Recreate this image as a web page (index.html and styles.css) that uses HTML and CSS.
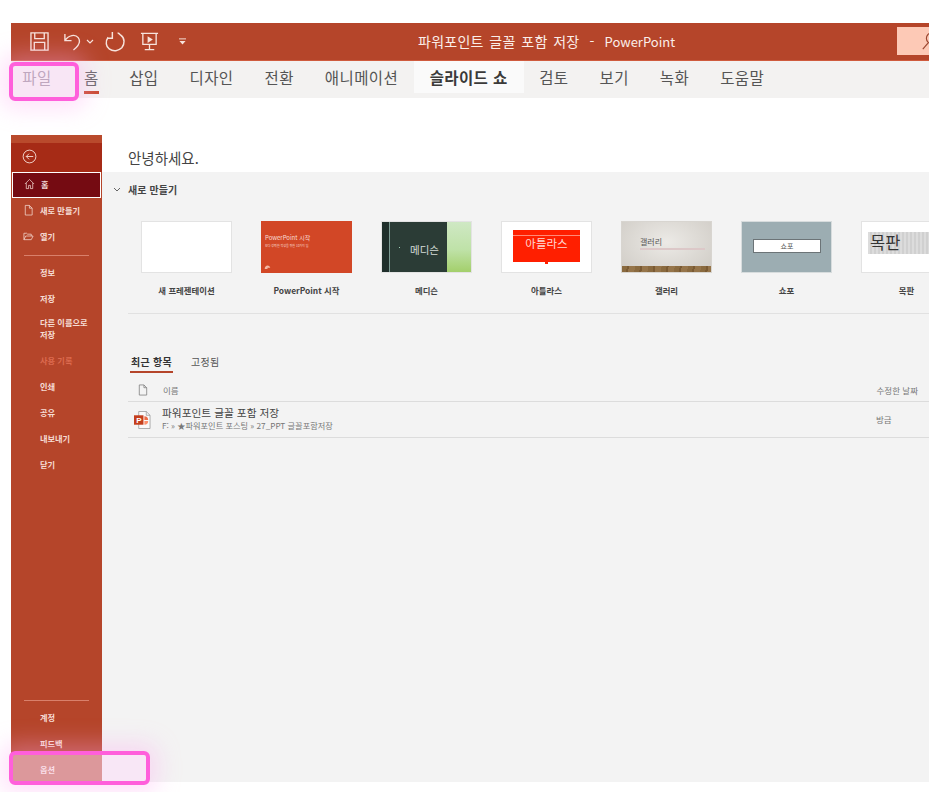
FILE: index.html
```html
<!DOCTYPE html>
<html lang="ko">
<head>
<meta charset="utf-8">
<title>파워포인트 글꼴 포함 저장 - PowerPoint</title>
<link rel="stylesheet" href="styles.css">
</head>
<body>
<div class="window">
  <header class="titlebar">
    <div class="qat">
      <svg class="qi save" viewBox="0 0 20 20"><path d="M1 1h18v18H1zM5 1v6h10V1M4.500 19v-8h11v8"/></svg>
      <svg class="qi undo" viewBox="0 0 20 20"><path d="M2 2v7h7M2 9C6 3 13 2 16 6c3 4 0 9-5 13"/></svg>
      <svg class="qchev" viewBox="0 0 8 5"><path d="M1 1l3 3 3-3"/></svg>
      <svg class="qi redo" viewBox="0 0 20 20"><path d="M7 1v6H2M3 6C0 10 1 15 4 17c4 3 9 2 12-1 3-4 3-9-1-12-1-1-2-2-3-2"/></svg>
      <svg class="qi show" viewBox="0 0 20 20"><path d="M1 1.500h18M3 1.500V13h14V1.500M10 13v5M5 18.500h10"/><path class="fill" d="M8 4.500l5.500 3.500L8 11.500z"/></svg>
      <svg class="qmore" viewBox="0 0 10 8"><path d="M1 1h8"/><path class="fill" d="M1.500 3.500h7L5 7.500z"/></svg>
    </div>
    <div class="doc-title">파워포인트 글꼴 포함 저장<span class="dt-dash">-</span><span class="dt-app">PowerPoint</span></div>
    <div class="search">
      <svg viewBox="0 0 20 20"><circle cx="12" cy="7" r="6"/><path d="M8 12l-6 7"/></svg>
    </div>
  </header>
  <nav class="ribbon">
    <span class="tab tab-file">파일</span>
    <span class="tab tab-home">홈</span>
    <span class="tab">삽입</span>
    <span class="tab">디자인</span>
    <span class="tab">전환</span>
    <span class="tab">애니메이션</span>
    <span class="tab tab-active">슬라이드 쇼</span>
    <span class="tab">검토</span>
    <span class="tab">보기</span>
    <span class="tab">녹화</span>
    <span class="tab">도움말</span>
  </nav>
  <div class="ribbon-gap"></div>
  <div class="backstage">
    <aside class="sidebar">
      <div class="side-band"></div>
      <div class="side-back">
        <svg viewBox="0 0 16 16"><circle cx="8" cy="8" r="6.800"/><path d="M12 8H4.500M7.500 5l-3 3 3 3"/></svg>
      </div>
      <div class="side-item side-current">
        <svg class="side-icon" viewBox="0 0 12 12"><path d="M1 6l5-5 5 5M2.500 5v6h2.500V7.500h2V11h2.500V5"/></svg>
        <span>홈</span>
      </div>
      <div class="side-item">
        <svg class="side-icon" viewBox="0 0 12 12"><path d="M2.500 1h4.500l3 3v7.500H2.500zM7 1v3h3"/></svg>
        <span>새로 만들기</span>
      </div>
      <div class="side-item">
        <svg class="side-icon" viewBox="0 0 12 12"><path d="M1 10V3h3l1 1h4v2M1 10l2-4h8l-2 4z"/></svg>
        <span>열기</span>
      </div>
      <div class="side-rule"></div>
      <div class="side-link">정보</div>
      <div class="side-link">저장</div>
      <div class="side-link side-two">다른 이름으로<br>저장</div>
      <div class="side-link side-dim">사용 기록</div>
      <div class="side-link">인쇄</div>
      <div class="side-link">공유</div>
      <div class="side-link">내보내기</div>
      <div class="side-link">닫기</div>
      <div class="side-spacer"></div>
      <div class="side-rule side-rule-low"></div>
      <div class="side-link side-low">계정</div>
      <div class="side-link side-low">피드백</div>
      <div class="side-link side-low">옵션</div>
    </aside>
    <main class="content">
      <h1 class="greeting">안녕하세요.</h1>
      <div class="panel">
        <div class="new-head">
          <svg viewBox="0 0 8 5"><path d="M1 1l3 3 3-3"/></svg>
          <span>새로 만들기</span>
        </div>
        <div class="templates">
          <figure class="tpl">
            <div class="thumb t-blank"></div>
            <figcaption>새 프레젠테이션</figcaption>
          </figure>
          <figure class="tpl">
            <div class="thumb t-start">
              <div class="ts-title">PowerPoint 시작</div>
              <div class="ts-sub">보다 강력한 작성을 위한 10가지 팁</div>
              <svg class="ts-logo" viewBox="0 0 10 8"><path d="M1 7c0-3 2-5 4-5 2 0 3 1 4 3H5v2z"/></svg>
            </div>
            <figcaption>PowerPoint 시작</figcaption>
          </figure>
          <figure class="tpl">
            <div class="thumb t-med">
              <i class="tm-strip"></i>
              <i class="tm-line"></i>
              <i class="tm-dot"></i>
              <span class="tm-text">메디슨</span>
              <i class="tm-green"></i>
            </div>
            <figcaption>메디슨</figcaption>
          </figure>
          <figure class="tpl">
            <div class="thumb t-atlas">
              <div class="ta-box">아틀라스</div>
            </div>
            <figcaption>아틀라스</figcaption>
          </figure>
          <figure class="tpl">
            <div class="thumb t-gal">
              <div class="tg-body"><span>갤러리</span></div>
              <div class="tg-wood"></div>
            </div>
            <figcaption>갤러리</figcaption>
          </figure>
          <figure class="tpl">
            <div class="thumb t-show"><div class="tsh-box">쇼포</div></div>
            <figcaption>쇼포</figcaption>
          </figure>
          <figure class="tpl">
            <div class="thumb t-wood"><div class="tw-band">목판</div></div>
            <figcaption>목판</figcaption>
          </figure>
        </div>
        <div class="divider"></div>
        <div class="tabs2">
          <span class="t2 t2-on">최근 항목</span>
          <span class="t2">고정됨</span>
        </div>
        <div class="list-head">
          <svg class="lh-icon" viewBox="0 0 10 13"><path d="M1 1h5l3 3v8H1zM6 1v3h3"/></svg>
          <span class="lh-name">이름</span>
          <span class="lh-date">수정한 날짜</span>
        </div>
        <div class="row">
          <svg class="ppt" viewBox="0 0 18 20">
            <path class="ppt-page" d="M5 1h8l4 4v14H5z"/>
            <path class="ppt-fold" d="M13 1v4h4"/>
            <path class="ppt-o" d="M11 6a4 4 0 0 1 4 4h-4z"/>
            <path class="ppt-l" d="M11 11h4a4 4 0 0 1-4 4z"/>
            <rect class="ppt-b" x="0" y="5" width="10" height="10"/>
            <text x="2.300" y="13" class="ppt-t">P</text>
          </svg>
          <div class="row-text">
            <div class="row-name">파워포인트 글꼴 포함 저장</div>
            <div class="row-path">F: » ★파워포인트 포스팅 » 27_PPT 글꼴포함저장</div>
          </div>
          <span class="row-date">방금</span>
        </div>
      </div>
    </main>
  </div>
</div>
<div class="mark mark-file"></div>
<div class="mark mark-opt"></div>
</body>
</html>
```

FILE: styles.css
```css
* { box-sizing: border-box; }
html, body { margin: 0; padding: 0; }
body {
  width: 929px;
  height: 792px;
  overflow: hidden;
  background: #fff;
  position: relative;
  font-family: "Noto Sans CJK KR", "Noto Sans", sans-serif;
  color: #444;
}
svg { fill: none; display: block; }

.window { margin-left: 11px; padding-top: 23px; width: 918px; }

.titlebar {
  height: 38px;
  background: #b5452a;
  border-bottom: 1px solid #cf5b3e;
  display: flex;
  align-items: center;
  position: relative;
  color: #fff;
}
.qat { display: flex; align-items: center; padding-left: 19px; }
.qi { stroke: #f7e3dc; stroke-width: 1.400; width: 19px; height: 19px; }
.qi .fill, .qmore .fill { fill: #f7e3dc; stroke: none; }
.undo { margin-left: 14px; }
.qchev { width: 8px; height: 5px; stroke: #f7e3dc; stroke-width: 1.200; margin-left: 4px; }
.redo { margin-left: 11px; width: 21px; height: 21px; }
.show { margin-left: 14px; }
.qmore { width: 9px; height: 7px; stroke: #f7e3dc; stroke-width: 1.100; margin-left: 19px; }
.doc-title {
  position: absolute;
  left: 407px;
  top: 8px;
  font-size: 14px;
  line-height: 20px;
  letter-spacing: 0.250px;
  word-spacing: 1.500px;
  color: #fbeee9;
  white-space: nowrap;
}
.dt-dash { margin-left: 10px; }
.dt-app { margin-left: 10px; font-size: 13px; letter-spacing: 0; }
.search {
  margin-left: auto;
  width: 32px;
  height: 28px;
  background: #fdc9b6;
  margin-top: -1px;
  display: flex;
  align-items: center;
  padding-left: 24px;
  overflow: hidden;
}
.search svg { width: 18px; height: 18px; flex: none; stroke: #9a4630; stroke-width: 1.300; }

.ribbon {
  height: 37px;
  background: #f3f2f1;
  display: flex;
  font-size: 15.500px;
  color: #555;
}
.tab {
  height: 32px;
  line-height: 33px;
  padding: 0 15.500px;
  white-space: nowrap;
  letter-spacing: 0.400px;
}
.tab-file { width: 52px; text-align: center; padding: 0; color: #75667a; }
.tab-home {
  padding: 0 6px;
  margin-right: 9px;
  margin-left: 15px;
  position: relative;
  color: #666;
}
.tab-home::after {
  content: "";
  position: absolute;
  left: 6px;
  right: 6px;
  bottom: -1px;
  height: 3px;
  background: #c8492e;
}
.tab-active {
  background: #fafafa;
  font-weight: 700;
  color: #3b3a39;
  padding: 0 16px;
}

.ribbon-gap { height: 37px; }

.backstage { display: flex; height: 647px; }

.sidebar {
  width: 91px;
  flex: none;
  background: #b5452a;
  color: #f6ddd5;
  font-size: 8.200px;
  display: flex;
  flex-direction: column;
}
.side-band { height: 8px; background: #b94a2c; }
.side-back {
  height: 29px;
  background: #a62b16;
  padding: 6px 0 0 11px;
}
.side-back svg { width: 15px; height: 15px; stroke: #f3d9d1; stroke-width: 1; }
.side-item {
  height: 26px;
  display: flex;
  align-items: center;
  padding-left: 12px;
  padding-bottom: 2px;
  font-weight: 700;
}
.side-item span { margin-left: 6px; white-space: nowrap; }
.side-icon { width: 11px; height: 12px; stroke: #f6ddd5; stroke-width: 0.800; flex: none; }
.side-current {
  margin: 0 1px;
  padding-left: 11px;
  background: #750b12;
  border: 1px solid #fff;
  color: #eed5d5;
}
.side-rule {
  height: 1px;
  margin: 5px 13px 3px;
  background: #d9806b;
}
.side-link {
  height: 26px;
  line-height: 26px;
  padding-left: 29px;
  font-weight: 700;
  white-space: nowrap;
}
.side-two { height: 36px; line-height: 11.500px; padding-top: 6px; }
.side-dim { color: #dc6a4f; }
.side-spacer { flex: 1; }
.side-rule-low { margin: 0 13px 3px; }
.side-low { line-height: 27px; }

.content { flex: 1; min-width: 0; display: flex; flex-direction: column; background: #fff; }
.greeting {
  margin: 0;
  height: 37px;
  padding: 12px 0 0 26px;
  font-size: 14.500px;
  line-height: 22px;
  font-weight: 400;
  color: #444;
}
.panel { flex: 1; background: #f3f3f3; overflow: hidden; }
.new-head {
  height: 36px;
  margin-bottom: 13px;
  display: flex;
  align-items: center;
  padding: 0 0 2px 11px;
  font-size: 10px;
  letter-spacing: 0.100px;
  font-weight: 700;
  color: #444;
}
.new-head svg { width: 8px; height: 5px; stroke: #555; stroke-width: 0.900; margin-right: 7px; }

.templates { display: flex; padding-left: 39px; gap: 29px; height: 92px; }
.tpl { margin: 0; width: 91px; flex: none; }
.tpl figcaption {
  margin-top: 10px;
  font-size: 8.400px;
  line-height: 14px;
  font-weight: 700;
  text-align: center;
  color: #444;
  white-space: nowrap;
}
.thumb {
  width: 91px;
  height: 52px;
  border: 1px solid #e3e3e3;
  position: relative;
  overflow: hidden;
  background: #fff;
}
.t-start { background: #d24726; border-color: #d24726; color: #f9dcd2; padding: 12px 3px; }
.ts-title { font-size: 6px; line-height: 8px; white-space: nowrap; }
.ts-sub { font-size: 3px; line-height: 4px; margin-top: 2px; white-space: nowrap; }
.ts-logo { position: absolute; left: 2px; bottom: 2px; width: 7px; height: 6px; fill: #f3b9a6; }
.t-med { background: #2b3c36; }
.tm-strip { position: absolute; left: 0; top: 0; bottom: 0; width: 7px; background: #1f2f2b; }
.tm-line { position: absolute; left: 7px; top: 0; bottom: 0; width: 1px; background: #7d9c94; }
.tm-dot { position: absolute; left: 17px; top: 25px; width: 1px; height: 1px; background: #9fd0b8; }
.tm-text {
  position: absolute;
  left: 28px;
  top: 21px;
  font-size: 10.500px;
  line-height: 14px;
  color: #d5dcd8;
  white-space: nowrap;
}
.tm-green {
  position: absolute;
  right: 0;
  top: 0;
  bottom: 0;
  width: 24px;
  background: linear-gradient(180deg, #cfe8c4 0%, #bfe2a8 55%, #a3cf6b 100%);
}
.t-atlas { display: flex; justify-content: center; padding-top: 8px; }
.ta-box {
  width: 67px;
  height: 32px;
  background: #ff1f00;
  border-top: 5px solid #ff1f00;
  box-shadow: inset 0 1px 0 #ff8a78;
  color: #ffd8d2;
  font-size: 11.500px;
  line-height: 17px;
  text-align: center;
  position: relative;
}
.ta-box::after {
  content: "";
  position: absolute;
  left: 32px;
  bottom: -2px;
  width: 3px;
  height: 3px;
  background: #ff1f00;
}
.t-gal {
  background: radial-gradient(ellipse at 50% 40%, #eceae6 0%, #cfcbc5 100%);
  display: flex;
  flex-direction: column;
  border-color: #d8d5d0;
}
.tg-body { height: 45px; padding: 14px 0 0 18px; }
.tg-body span {
  display: block;
  width: 65px;
  font-size: 8px;
  line-height: 12px;
  color: #555;
  border-bottom: 2px solid #dcc8c8;
  white-space: nowrap;
}
.tg-wood {
  height: 6px;
  margin-top: auto;
  background: repeating-linear-gradient(100deg, #8a6a3f 0 5px, #7a5a33 5px 7px, #96754a 7px 13px);
}
.t-show { background: #9cadb2; border-color: #d7dcdd; padding-top: 17px; }
.tsh-box {
  width: 68px;
  height: 14px;
  margin-left: 11px;
  background: #fff;
  border: 1px solid #6c7477;
  font-size: 7px;
  line-height: 12px;
  text-align: center;
  color: #555;
}
.t-wood { padding: 10px 0 0 6px; }
.tw-band {
  width: 85px;
  height: 22px;
  background: repeating-linear-gradient(90deg, #dcdcdc 0 2px, #d0d0d0 2px 4px);
  font-size: 16.500px;
  line-height: 20px;
  padding-left: 2px;
  color: #333;
  white-space: nowrap;
}

.divider { height: 1px; margin-left: 26px; background: #e1e1e1; }

.tabs2 { display: flex; margin: 39px 0 0 28px; font-size: 10px; letter-spacing: 0.300px; height: 20px; gap: 17px; }
.t2 { line-height: 17px; padding: 0 1px; color: #555; white-space: nowrap; }
.t2-on { font-weight: 700; color: #333; border-bottom: 2px solid #b5452a; height: 20px; }

.list-head {
  height: 29px;
  margin-left: 26px;
  display: flex;
  align-items: center;
  font-size: 8.500px;
  color: #777;
  border-bottom: 1px solid #dcdcdc;
  padding-top: 5px;
}
.lh-icon { width: 10px; height: 12px; stroke: #777; stroke-width: 0.800; margin-left: 10px; }
.lh-name { margin-left: 15px; }
.lh-date { margin-left: auto; margin-right: 11px; white-space: nowrap; }

.row {
  height: 36px;
  margin-left: 26px;
  display: flex;
  align-items: center;
  border-bottom: 1px solid #dcdcdc;
}
.ppt { width: 17px; height: 20px; margin-left: 6px; flex: none; }
.ppt-page { fill: #fafafa; stroke: #8a8a8a; stroke-width: 0.700; }
.ppt-fold { stroke: #8a8a8a; stroke-width: 0.700; }
.ppt-o { fill: #ed6c47; }
.ppt-l { fill: #ff8f6b; }
.ppt-b { fill: #c43e1c; }
.ppt-t { fill: #fff; font-size: 8.500px; font-weight: 700; font-family: "Liberation Sans", sans-serif; }
.row-text { margin-left: 11px; padding-bottom: 3px; }
.row-name { font-size: 10.700px; line-height: 14px; color: #444; white-space: nowrap; }
.row-path { font-size: 8.200px; line-height: 10px; color: #777; white-space: nowrap; }
.row-date { margin-left: auto; width: 53px; font-size: 8.500px; color: #777; padding-bottom: 2px; }

.mark {
  position: absolute;
  border: 4px solid #ff5fdb;
  border-radius: 6px;
  background: rgba(252, 220, 248, 0.55);
  box-shadow: 0 0 22px 8px rgba(255, 170, 240, 0.35);
}
.mark-file { left: 9px; top: 62px; width: 70px; height: 39px; }
.mark-opt { left: 9px; top: 751px; width: 141px; height: 34px; }
```
